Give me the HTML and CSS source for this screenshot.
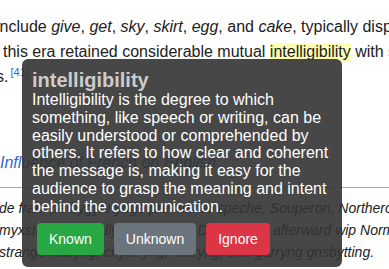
FILE: index.html
```html
<!DOCTYPE html>
<html lang="en">
<head>
    <meta charset="UTF-8">
    <meta name="viewport" content="width=device-width, initial-scale=1.0">
    <title>Middle English</title>
    <link rel="stylesheet" href="styles.css">
</head>
<body>
    <div class="article">
        <p class="para">
            <span class="line">include <i>give</i>, <i>get</i>, <i>sky</i>, <i>skirt</i>, <i>egg</i>, and <i>cake</i>, typically displacing</span>
            <span class="line line-2">i this era retained considerable mutual <mark class="hl">intelligibility</mark> with <a class="redlink" href="#">some</a></span>
            <span class="line">s.<sup class="ref"><a href="#">[41]</a></sup></span>
        </p>
        <div class="hatnote"><a href="#">Influence of French on English</a></div>
        <div class="rule"></div>
        <blockquote class="quote">
            <span class="line">de fram pe bygynnynge pre maner speche, Souperon, Northeron, and</span>
            <span class="line">myxstion and mellyng, furst wip Danes, and afterward wip Normans,</span>
            <span class="line">strange wallyng, chyteryng, harryng, and garryng grisbytting.</span>
        </blockquote>
    </div>

    <div class="tooltip">
        <div class="tip-title">intelligibility</div>
        <div class="tip-body">Intelligibility is the degree to which something, like speech or writing, can be easily understood or comprehended by others. It refers to how clear and coherent the message is, making it easy for the audience to grasp the meaning and intent behind the communication.</div>
        <div class="tip-actions">
            <button class="btn btn-known">Known</button>
            <button class="btn btn-unknown">Unknown</button>
            <button class="btn btn-ignore">Ignore</button>
        </div>
    </div>
</body>
</html>
```

FILE: styles.css
```css
body {
    margin: 0;
    overflow: hidden;
    background: #fff;
    color: #202122;
    font-family: "Liberation Sans", Arial, sans-serif;
    font-size: 16px;
}

.article {
    width: 420px;
}

.line {
    display: block;
    white-space: nowrap;
}

.para {
    margin: 14px 0 0 -4px;
    line-height: 25px;
}

.line-2 {
    margin-left: -1px;
}

.hl {
    background: #ffffb3;
    color: inherit;
    padding-bottom: 1px;
}

.redlink {
    color: #d33;
    text-decoration: none;
}

.ref {
    font-size: 11px;
    line-height: 1;
    padding-left: 2px;
}

.ref a {
    color: #36c;
    text-decoration: none;
}

.hatnote {
    margin-top: 61px;
    line-height: 25px;
    font-style: italic;
}

.hatnote a {
    color: #36c;
    text-decoration: none;
}

.rule {
    margin-top: 12px;
    border-top: 1px solid #a2a9b1;
}

.quote {
    margin: 9px 0 0 -1px;
    font-size: 14px;
    line-height: 22px;
    font-style: italic;
}

/* popup */
.tooltip {
    position: absolute;
    left: 22px;
    top: 59px;
    width: 320px;
    box-sizing: border-box;
    padding: 10px 10px 12px;
    background: rgba(51, 51, 51, 0.9);
    border-radius: 6px;
    color: #fff;
    font-family: "Liberation Sans", Arial, sans-serif;
}

.tip-title {
    font-size: 20px;
    font-weight: bold;
    line-height: 22px;
    color: #ccc;
}

.tip-body {
    font-size: 16px;
    line-height: 17.8px;
}

.tip-actions {
    display: flex;
    margin-top: 7px;
}

.btn {
    margin: 0 5px;
    padding: 6px 12px;
    border: none;
    border-radius: 4px;
    color: #fff;
    font-family: "Liberation Sans", Arial, sans-serif;
    font-size: 14px;
    line-height: 20px;
    cursor: pointer;
}

.btn-known {
    background: #28a745;
}

.btn-unknown {
    background: #6c757d;
}

.btn-ignore {
    background: #dc3545;
}
```
